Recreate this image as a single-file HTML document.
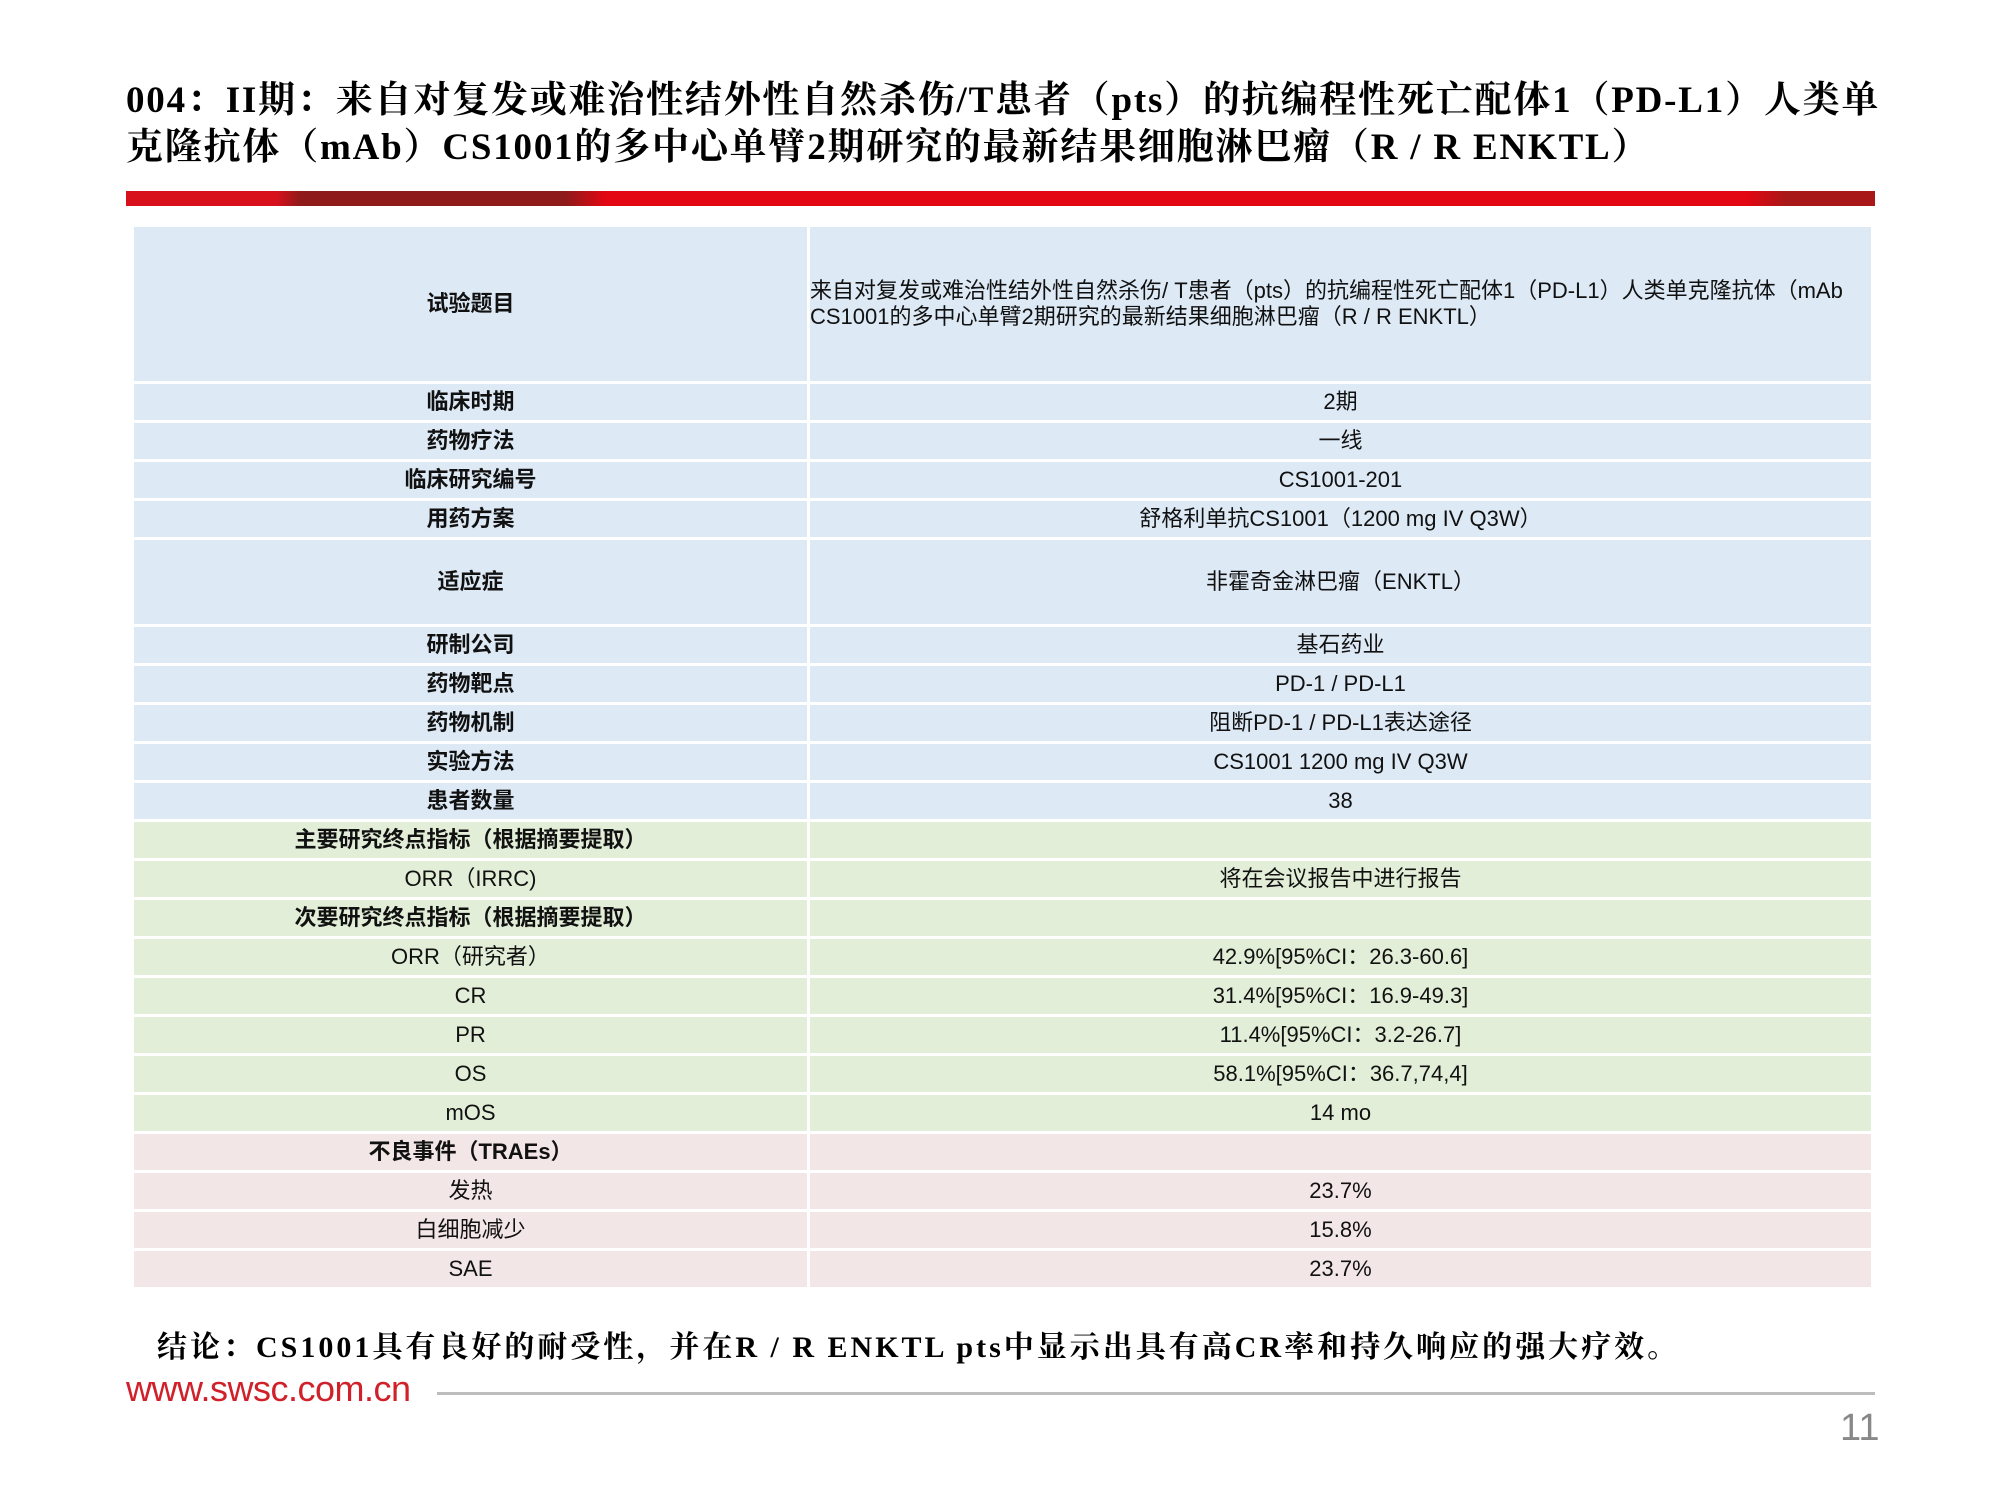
<!DOCTYPE html>
<html><head><meta charset="utf-8"><style>
body{margin:0;width:2000px;height:1500px;background:#fff;position:relative;overflow:hidden;font-family:"Liberation Sans","Noto Sans CJK SC",sans-serif}
.title{position:absolute;left:126px;top:77px;font-family:"Liberation Serif","Noto Serif CJK SC",serif;font-weight:bold;font-size:37px;line-height:47px;color:#000;white-space:nowrap;letter-spacing:1.8px}
.bar{position:absolute;left:126px;top:191px;width:1749px;height:15px;background:linear-gradient(90deg,#d8101c 0,#d8101c 150px,#8e1a1a 175px,#8e1a1a 440px,#e30613 480px,#e30613 1620px,#a81818 1660px,#a81818 100%)}
table{position:absolute;left:131px;top:224px;width:1743px;border-collapse:collapse;font-size:22px;color:#111}
td{border:3px solid #fff;text-align:center;padding:0;height:36px;line-height:26px}
td:first-child{width:673px}
.b td{background:#dde9f5}.g td{background:#e2eed8}.p td{background:#f2e6e6}
.h td:first-child{font-weight:bold}
.note{position:absolute;left:157px;top:1322px;font-family:"Liberation Serif","Noto Serif CJK SC",serif;font-weight:bold;font-size:30px;white-space:nowrap;letter-spacing:3px}
.url{position:absolute;left:126px;top:1368px;font-size:36px;color:#d0202a;letter-spacing:-0.5px}
.line{position:absolute;left:437px;top:1392px;width:1438px;height:3px;background:#bdbdbd}
.num{position:absolute;left:1840px;top:1407px;font-size:38px;color:#888}
</style></head><body>
<div class="title">004：II期：来自对复发或难治性结外性自然杀伤/T患者（pts）的抗编程性死亡配体1（PD-L1）人类单<br>克隆抗体（mAb）CS1001的多中心单臂2期研究的最新结果细胞淋巴瘤（R / R ENKTL）</div>
<div class="bar"></div>
<table>
<tr class="b h"><td style="height:154px">试验题目</td><td style="text-align:left">来自对复发或难治性结外性自然杀伤/ T患者（pts）的抗编程性死亡配体1（PD-L1）人类单克隆抗体（mAb<br>CS1001的多中心单臂2期研究的最新结果细胞淋巴瘤（R / R ENKTL）</td></tr>
<tr class="b h"><td>临床时期</td><td>2期</td></tr>
<tr class="b h"><td>药物疗法</td><td>一线</td></tr>
<tr class="b h"><td>临床研究编号</td><td>CS1001-201</td></tr>
<tr class="b h"><td>用药方案</td><td>舒格利单抗CS1001（1200 mg IV Q3W）</td></tr>
<tr class="b h"><td style="height:84px">适应症</td><td>非霍奇金淋巴瘤（ENKTL）</td></tr>
<tr class="b h"><td>研制公司</td><td>基石药业</td></tr>
<tr class="b h"><td>药物靶点</td><td>PD-1 / PD-L1</td></tr>
<tr class="b h"><td>药物机制</td><td>阻断PD-1 / PD-L1表达途径</td></tr>
<tr class="b h"><td>实验方法</td><td>CS1001 1200 mg IV Q3W</td></tr>
<tr class="b h"><td>患者数量</td><td>38</td></tr>
<tr class="g h"><td>主要研究终点指标（根据摘要提取）</td><td></td></tr>
<tr class="g"><td>ORR（IRRC)</td><td>将在会议报告中进行报告</td></tr>
<tr class="g h"><td>次要研究终点指标（根据摘要提取）</td><td></td></tr>
<tr class="g"><td>ORR（研究者）</td><td>42.9%[95%CI：26.3-60.6]</td></tr>
<tr class="g"><td>CR</td><td>31.4%[95%CI：16.9-49.3]</td></tr>
<tr class="g"><td>PR</td><td>11.4%[95%CI：3.2-26.7]</td></tr>
<tr class="g"><td>OS</td><td>58.1%[95%CI：36.7,74,4]</td></tr>
<tr class="g"><td>mOS</td><td>14 mo</td></tr>
<tr class="p h"><td>不良事件（TRAEs）</td><td></td></tr>
<tr class="p"><td>发热</td><td>23.7%</td></tr>
<tr class="p"><td>白细胞减少</td><td>15.8%</td></tr>
<tr class="p"><td>SAE</td><td>23.7%</td></tr>
</table>
<div class="note">结论：CS1001具有良好的耐受性，并在R / R ENKTL pts中显示出具有高CR率和持久响应的强大疗效。</div>
<div class="url">www.swsc.com.cn</div>
<div class="line"></div>
<div class="num">11</div>
</body></html>
